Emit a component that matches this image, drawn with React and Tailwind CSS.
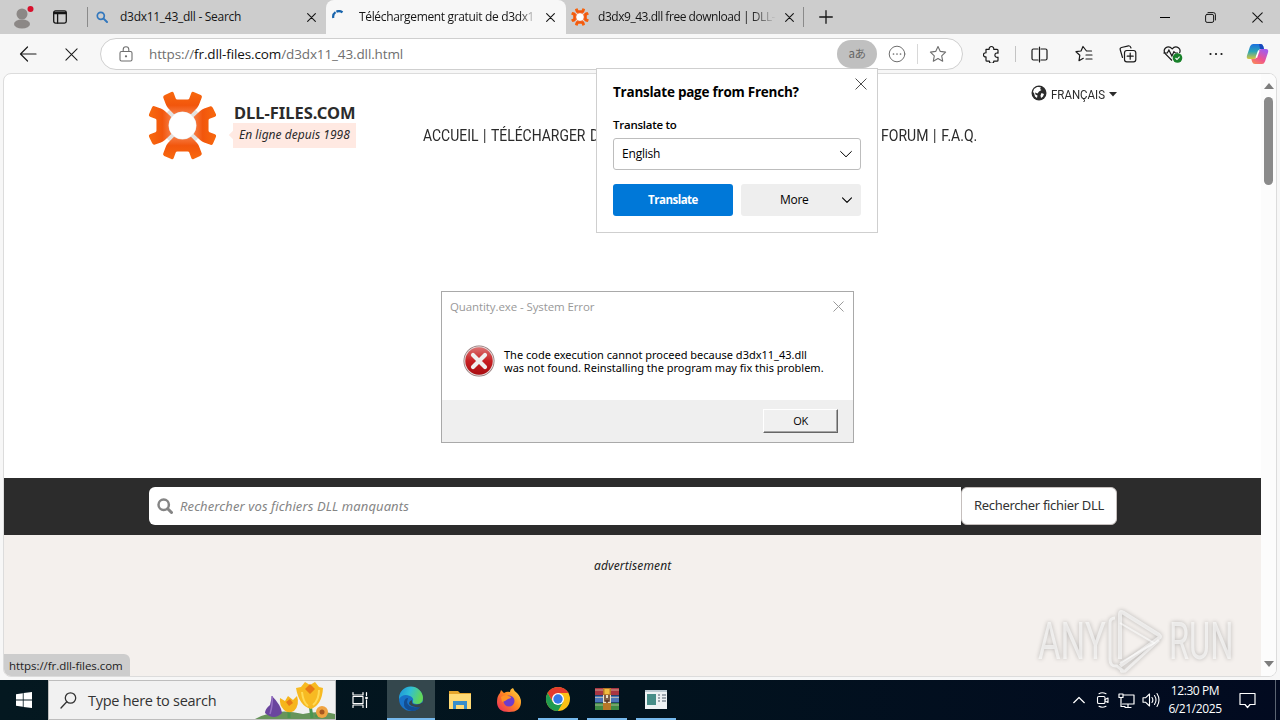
import React from "react";

function Icon({ size = 20, className = "", children, box = 20, width = 1.1 }) {
  return (
    <svg
      width={size}
      height={size}
      viewBox={`0 0 ${box} ${box}`}
      fill="none"
      stroke="currentColor"
      strokeWidth={width}
      strokeLinecap="round"
      strokeLinejoin="round"
      className={`shrink-0 ${className}`}
    >
      {children}
    </svg>
  );
}

function Cross({ size = 10, className = "", width = 1.2 }) {
  return (
    <Icon size={size} box={10} width={width} className={className}>
      <path d="M.7.7l8.6 8.6M9.3.7L.7 9.3" />
    </Icon>
  );
}

// Four orange arms around a white hole
function GearLogo({ size, className = "" }) {
  return (
    <svg width={size} height={size} viewBox="-102 -102 204 204" className={`shrink-0 ${className}`}>
      <defs>
        <linearGradient id="arm" x1="0" y1="0" x2="0" y2="1">
          <stop offset="0" stopColor="#f8690f" />
          <stop offset="0.6" stopColor="#f2560c" />
          <stop offset="1" stopColor="#f67c45" />
        </linearGradient>
      </defs>
      <circle r="60" fill="#e4e1df" />
      {[0, 90, 180, 270].map((angle) => (
        <path
          key={angle}
          transform={`rotate(${angle})`}
          d="M-52-90L-33-99Q-28-101-26-96L-20-80Q-19-77-15-77H15Q19-77 20-80L26-96Q28-101 33-99L54-90Q59-87 57-83L50-64Q48-58 43-52L25-33A41 41 0 0 0-25-33L-43-52Q-48-58-50-64L-57-83Q-58-87-52-90Z"
          fill="url(#arm)"
        />
      ))}
      <circle r="40" fill="white" />
    </svg>
  );
}

function TitleBar() {
  return (
    <div className="flex h-[34px] items-center bg-[#cdcdcd] text-[12px] text-[#151515]">
      {/* Profile */}
      <div className="flex w-[44px] justify-center">
        <svg width="24" height="24" viewBox="0 0 24 24">
          <circle cx="12" cy="9" r="5.5" fill="#8c8886" />
          <ellipse cx="12" cy="19" rx="8" ry="4.6" fill="#8c8886" />
          <circle cx="20.5" cy="4" r="3" fill="#d8102c" />
        </svg>
      </div>

      <div className="flex w-[43px] justify-center pr-[11px]">
        <Icon size={14} box={14} width={1.3}>
          <rect x=".7" y=".9" width="12.6" height="12.2" rx="1.8" />
          <path d="M1 2.3h12M1 3.5h12M4.6 3.5V13" />
        </Icon>
      </div>
      <div className="h-5 w-px bg-[#8a8a8a]" />

      {/* Tabs */}
      <div className="flex h-full w-[238px] items-center pl-2">
        <Icon size={12} box={12} width={1.7} className="text-[#3277bd]">
          <circle cx="4.8" cy="4.8" r="3.5" />
          <path d="M7.6 7.6l3.4 3.4" strokeWidth="2" />
        </Icon>
        <span className="ml-3 w-[187px] whitespace-nowrap tracking-[-0.28px]">d3dx11_43_dll - Search</span>
        <Cross size={9} />
      </div>

      <div className="flex h-full w-[240px] items-center rounded-t-lg bg-[#f7f7f7] pl-[6px]">
        <Icon size={14} box={14} width={2.2} className="text-[#1763ab]">
          <path d="M1.3 8A5.7 5.7 0 0 1 10.5 2.4" strokeDasharray="6.5 1" strokeLinecap="butt" />
        </Icon>
        <span className="ml-[13px] w-[178px] whitespace-nowrap tracking-[-0.34px] [mask-image:linear-gradient(to_right,black_90%,transparent)]">
          Téléchargement gratuit de d3dx1
        </span>
        <Cross size={9} className="ml-[9px]" />
      </div>

      <div className="flex h-full w-[237px] items-center pl-[5px]">
        <GearLogo size={18} />
        <span className="ml-[9px] w-[178px] whitespace-nowrap tracking-[-0.46px] [mask-image:linear-gradient(to_right,black_86%,transparent)]">
          d3dx9_43.dll free download | DLL-
        </span>
        <Cross size={9} className="ml-[9px]" />
      </div>
      <div className="h-5 w-px bg-[#8a8a8a]" />
      <Icon size={14} box={14} width={1.3} className="ml-[15px]">
        <path d="M7 .7v12.6M.7 7h12.6" />
      </Icon>

      {/* Window controls */}
      <div className="ml-auto flex h-full">
        <div className="flex w-[46px] items-center justify-center">
          <div className="h-px w-[10px] bg-black" />
        </div>
        <div className="flex w-[46px] items-center justify-center pr-px">
          <Icon size={11} box={11} width={1}>
            <rect x=".6" y="2.4" width="8" height="8" rx="1.5" />
            <path d="M3 .6h5.4a2 2 0 0 1 2 2V8" />
          </Icon>
        </div>
        <div className="flex w-[46px] items-center justify-center">
          <Cross size={11} width={1} />
        </div>
      </div>
    </div>
  );
}

function Copilot() {
  return (
    <svg width="23" height="22" viewBox="0 0 23 22" className="shrink-0">
      <defs>
        <linearGradient id="cpa" x1="0" y1="0" x2="0" y2="1">
          <stop offset="0" stopColor="#1b6fe0" />
          <stop offset=".5" stopColor="#2ba5b5" />
          <stop offset="1" stopColor="#d8c63c" />
        </linearGradient>
        <linearGradient id="cpb" x1="0" y1="1" x2=".6" y2="0">
          <stop offset="0" stopColor="#fb9250" />
          <stop offset=".5" stopColor="#ee5290" />
          <stop offset="1" stopColor="#a65be8" />
        </linearGradient>
      </defs>
      <path d="M7 1h7.5q2 0 2.7 2.3L18 6h-3q-2 0-2.6 2L10 14.5Q9.4 16 7.5 16H3Q0 16 1 12.5L4 3.5Q4.9 1 7 1Z" fill="url(#cpa)" />
      <path d="M13 1h1.5q2 0 2.7 2.3L18 6h-4Z" fill="#1849bd" />
      <path d="M16 21H9q-2.2 0-2.9-2.3L5.3 16H8q2 0 2.6-2L13 7.5Q13.6 6 15.5 6H20q3 0 2 3.5L19 18.5Q18.1 21 16 21Z" fill="url(#cpb)" />
      <path d="M10.3 14.7L12.8 7.4" stroke="white" strokeWidth="1.6" />
    </svg>
  );
}

function Toolbar() {
  return (
    <div className="flex h-10 items-center bg-[#f7f7f7] text-[#1a1a1a]">
      <div className="flex w-[100px] items-center pl-[19px]">
        <Icon size={18} box={18} width={1.2}>
          <path d="M17 9H1.5M8.5 2L1.5 9l7 7" />
        </Icon>
        <Cross size={13} width={0.8} className="ml-7" />
      </div>

      {/* Address bar */}
      <div className="flex h-8 w-[863px] items-center rounded-full border border-[#cfcfcf] bg-white text-[#6f6f6f]">
        <Icon size={16} box={16} width={1.1} className="ml-[17px]">
          <rect x="2" y="5.5" width="12" height="9.5" rx="1.5" />
          <path d="M5.2 5.5V3.6a2.8 2.8 0 0 1 5.6 0v1.9" />
          <circle cx="8" cy="10.3" r=".6" fill="currentColor" />
        </Icon>
        <div className="ml-[15px] w-[688px] whitespace-nowrap text-[13.5px] tracking-[-0.12px]">
          https://<span className="text-[#111]">fr.dll-files.com</span>/d3dx11_43.dll.html
        </div>
        <div className="flex h-7 w-10 items-center justify-center rounded-full bg-[#c0c0c0] pb-px font-['Noto_Sans_CJK_JP',sans-serif] text-[11.5px] tracking-[-0.5px] text-[#666]">
          aあ
        </div>
        <Icon size={18} box={18} width={1} className="ml-[11px]">
          <circle cx="9" cy="9" r="7.8" />
          <path d="M5.5 9h.01M9 9h.01M12.5 9h.01" strokeWidth="1.7" />
        </Icon>
        <div className="ml-[11px] h-5 w-px bg-[#d8d8d8]" />
        <Icon size={18} box={18} width={1.1} className="ml-[11px]">
          <path d="M9 1.5l2.3 4.9 5.3.7-3.900 3.7 1 5.4L9 13.6l-4.7 2.6 1-5.4-3.900-3.7 5.300-.7z" />
        </Icon>
      </div>

      {/* Actions */}
      <Icon size={18} box={18} width={1.2} className="ml-[20px]">
        <path d="M3 4.3h3.2a2.3 2.3 0 1 1 4.5 0h3.3q1 0 1 1v2.900a2.2 2.2 0 1 0 0 4v3q0 1-1 1h-3.200a2.2 2.2 0 0 1-4.4 0H4q-1 0-1-1v-3.300a2.1 2.1 0 1 1 0-4.100V4.300" />
      </Icon>
      <div className="ml-[14px] h-4 w-px bg-[#c4c4c4]" />
      <Icon size={17} box={17} width={1.2} className="ml-[15px]">
        <path d="M7 3H2.500Q1 3 1 4.500v8Q1 14 2.500 14H7M10 3h4.500Q16 3 16 4.500v8q0 1.500-1.500 1.500H10M8.500 1v15" />
      </Icon>
      <Icon size={18} box={18} width={1.2} className="ml-[27px]">
        <path d="M16.500 6h-5L8 1.500 6 6l-5 .7 3.800 3.600L4 15.700l4.300-2.400M11 10h6M11 14h6" />
      </Icon>
      <Icon size={18} box={18} width={1.2} className="ml-[26px]">
        <rect x="5.5" y="5.5" width="11.3" height="11.3" rx="2.3" />
        <path d="M3.500 12.500L1.300 5q-.6-2 1.200-2.500l7-1.700Q11.300.5 12 3M11.200 8.200v6M8.200 11.200h6" />
      </Icon>
      <svg width="20" height="18" viewBox="0 0 20 18" className="ml-[26px] shrink-0">
        <g fill="none" stroke="#1a1a1a" strokeWidth="1.2">
          <path d="M9 15.500L2.200 8.700Q0 5.500 2.500 3 6 .2 9.200 3.800q3-3.600 6.500-.8Q18 5 16.500 8" />
          <path d="M.3 8h4l1.600-3 3 6 2-4.300L12.300 8H15" />
        </g>
        <circle cx="14.5" cy="13" r="4.8" fill="#18812a" />
        <path d="M12.500 13l1.500 1.500 2.600-2.800" fill="none" stroke="white" strokeWidth="1.1" />
      </svg>
      <Icon size={16} box={16} width={2.2} className="ml-[25px]">
        <path d="M2.500 8h.01M8 8h.01M13.500 8h.01" />
      </Icon>
      <div className="ml-[22px]">
        <Copilot />
      </div>
    </div>
  );
}

function SiteHeader() {
  return (
    <div className="flex h-[404px] items-start pl-[144px] text-[#2b2b2b]">
      <GearLogo size={69} className="-mr-px mt-[17px]" />

      <div className="ml-[17px] mt-[26px] w-[190px]">
        <div className="h-[23px] whitespace-nowrap pl-px text-[16.5px] leading-[26px] font-bold font-['Noto_Sans',sans-serif]">
          DLL-FILES.COM
        </div>
        <div className="relative h-[25px] w-[123px] whitespace-nowrap bg-[#ffe9e2] pl-[6px] text-[12px] leading-[24px] italic tracking-[0.04px] font-['Noto_Sans',sans-serif]">
          <div className="absolute -left-[3px] top-[9px] size-[6px] rotate-45 bg-[#ffe9e2]" />
          <span className="relative">En ligne depuis 1998</span>
        </div>
      </div>

      <div className="mt-[48px] flex w-[608px] whitespace-nowrap font-['Roboto',sans-serif] text-[17px] leading-[26px] [word-spacing:1.5px]">
        <div className="w-[458px]">
          <span className="inline-block origin-left scale-x-[0.82]">ACCUEIL | TÉLÉCHARGER DLL</span>
        </div>
        <span className="inline-block origin-left scale-x-[0.825]">FORUM | F.A.Q.</span>
      </div>

      <div className="mt-[10px] flex h-5 items-center whitespace-nowrap">
        <svg width="16" height="16" viewBox="0 0 16 16" className="mb-[3px] shrink-0">
          <circle cx="8" cy="8" r="7.5" fill="#2b2b2b" />
          <path d="M8 2l2 .5-1 1.500 1.500 1-2.500 1.500-1.500 2L4 7.500l.5 2 2 1-.5 2.500-2-1.500-1-3.500L2 7l1-3 3-2zM10.500 8l2.500 1-1 2.500-2 1.500-.5-2.500z" fill="white" />
        </svg>
        <span className="ml-1 w-[58px] font-['Roboto',sans-serif] text-[13.5px]">
          <span className="inline-block origin-left scale-x-[0.85]">FRANÇAIS</span>
        </span>
        <svg width="8" height="5" viewBox="0 0 8 5" className="shrink-0">
          <path d="M0 0h8L4 4.500z" fill="#2b2b2b" />
        </svg>
      </div>
    </div>
  );
}

function SearchStrip() {
  return (
    <div className="flex h-[57px] items-start bg-[#2c2c2c] pt-[9px] pl-[145px] font-['Noto_Sans',sans-serif] text-[13px]">
      <div className="flex h-[38px] w-[812px] items-center rounded-l-md bg-white text-[#858585]">
        <Icon size={16} box={16} width={2.5} className="ml-2">
          <circle cx="6.7" cy="6.7" r="5.2" />
          <path d="M10.700 10.700L14.500 14.500" strokeWidth="3" />
        </Icon>
        <span className="ml-[7px] whitespace-nowrap pt-px italic tracking-[0.1px]">Rechercher vos fichiers DLL manquants</span>
      </div>
      <div className="flex h-[38px] w-[156px] items-center justify-center whitespace-nowrap rounded-md border border-[#c5bfbd] bg-white tracking-[-0.33px] text-[#333]">
        Rechercher fichier DLL
      </div>
    </div>
  );
}

function Watermark() {
  return (
    <div className="absolute left-[1034px] top-[534px] flex h-[66px] w-[202px] items-center text-white/60 [filter:drop-shadow(0_0_2px_rgba(0,0,0,0.4))]">
      <span className="w-[68px] font-['Roboto',sans-serif] text-[51px] leading-none">
        <span className="inline-block origin-left scale-x-[0.68]">ANY</span>
      </span>
      <svg width="58" height="64" viewBox="0 0 58 64" fill="none" stroke="currentColor" className="shrink-0">
        <path d="M14 50V5q0-3 3-1.500L53 26q2 1.500 0 3L14 57" strokeWidth="4" />
        <path d="M14 14l34 20-34 20" strokeWidth="2" />
        <path d="M9 9q-5 0-5 5v36q0 8 7 7l5 4q-2 2 3 1l34-31" strokeWidth="3" />
      </svg>
      <span className="ml-[5px] font-['Roboto',sans-serif] text-[51px] leading-none">
        <span className="inline-block origin-left scale-x-[0.64]">RUN</span>
      </span>
    </div>
  );
}

function WebPage() {
  return (
    <div className="relative flex h-[604px] overflow-hidden rounded-lg border border-[#dcdcdc] bg-white">
      <div className="w-[1257px] shrink-0 overflow-hidden">
        <SiteHeader />
        <SearchStrip />
        <div className="h-[150px] bg-[#f4f0ed] pt-[21px] pl-[590px] font-['Noto_Sans',sans-serif] text-[12px] leading-5 tracking-[0.12px] italic text-[#222]">
          advertisement
        </div>
      </div>

      {/* Scrollbar */}
      <div className="flex flex-1 flex-col items-center bg-[#fcfcfc] pt-[9px] pb-[9px]">
        <svg width="10" height="6" viewBox="0 0 10 6">
          <path d="M0 6L5 0l5 6z" fill="#7d7d7d" />
        </svg>
        <div className="mt-2 h-[88px] w-[9px] rounded-full bg-[#8a8a8a]" />
        <svg width="10" height="6" viewBox="0 0 10 6" className="mt-auto">
          <path d="M0 0l5 6 5-6z" fill="#7d7d7d" />
        </svg>
      </div>

      {/* Link status */}
      <div className="absolute bottom-0 left-0 h-[22px] w-[126px] whitespace-nowrap rounded-tr-md bg-[#cdcdcd] pl-[5px] text-[11.5px] leading-[23px] tracking-[-0.06px] text-[#222]">
        https://fr.dll-files.com
      </div>
      <Watermark />
    </div>
  );
}

function TranslatePopup() {
  return (
    <div className="absolute left-[596px] top-[68px] h-[165px] w-[282px] border border-[#cfcfcf] bg-white px-4 text-[12px] text-black">
      <div className="flex h-[47px] items-center justify-between">
        <span className="whitespace-nowrap text-[13.5px] font-bold tracking-[-0.24px]">Translate page from French?</span>
        <Cross size={12} width={0.8} className="-mr-[6px] mb-[17px] text-[#444]" />
      </div>
      <div className="h-[22px] text-[11.5px] leading-[17px] font-semibold tracking-[-0.25px]">Translate to</div>
      <div className="flex h-8 items-center justify-between rounded-[3px] border border-[#bdbdbd] px-2">
        <span className="tracking-[-0.2px]">English</span>
        <Icon size={12} box={12} width={1}>
          <path d="M.6 3.500L6 8.800l5.400-5.300" />
        </Icon>
      </div>
      <div className="mt-[14px] flex gap-2">
        <div className="flex h-8 w-[120px] items-center justify-center rounded-[3px] bg-[#0078d8] text-[11.5px] font-bold tracking-[-0.5px] text-white">
          Translate
        </div>
        <div className="flex h-8 w-[120px] items-center rounded-[3px] bg-[#eeeeee] pl-[39px]">
          <span className="w-[62px] tracking-[-0.3px]">More</span>
          <Icon size={10} box={12} width={1.3}>
            <path d="M.6 3.500L6 8.800l5.400-5.300" />
          </Icon>
        </div>
      </div>
    </div>
  );
}

function ErrorDialog() {
  return (
    <div className="absolute left-[441px] top-[291px] flex h-[152px] w-[413px] flex-col border border-[#a9a9a9] bg-white">
      <div className="flex h-[30px] items-center justify-between pl-2 pr-[9px] text-[11.5px] text-[#999]">
        <span className="whitespace-nowrap tracking-[-0.1px]">Quantity.exe - System Error</span>
        <Cross size={11} width={0.9} className="mb-[2px]" />
      </div>
      <div className="flex flex-1 items-start pl-[21px] pt-[23px]">
        <svg width="32" height="32" viewBox="0 0 32 32" className="shrink-0">
          <defs>
            <linearGradient id="err" x1="0" y1="0" x2="0" y2="1">
              <stop offset="0" stopColor="#dc7373" />
              <stop offset=".5" stopColor="#c71f22" />
              <stop offset="1" stopColor="#a90d12" />
            </linearGradient>
          </defs>
          <circle cx="16" cy="16" r="15.5" fill="#8e7070" />
          <circle cx="16" cy="16" r="14.8" fill="#e3d7d7" />
          <circle cx="16" cy="16" r="13.7" fill="url(#err)" />
          <path d="M10 10l12 12M22 10L10 22" stroke="#f0f0f0" strokeWidth="4.2" strokeLinecap="round" />
        </svg>
        <div className="ml-[9px] mt-[3px] whitespace-nowrap font-['Noto_Sans',sans-serif] text-[11px] leading-[13px] text-black">
          <div>The code execution cannot proceed because d3dx11_43.dll</div>
          <div>was not found. Reinstalling the program may fix this problem.</div>
        </div>
      </div>
      <div className="flex h-[42px] justify-end bg-[#efefef] pr-[15px] pt-[9px]">
        <div className="h-6 w-[75px] border border-t-white border-l-white border-r-[#666] border-b-[#666] bg-[#f0f0f0] text-center text-[11px] leading-[22px] tracking-[-0.3px] shadow-[inset_-1px_-1px_0_#a5a5a5]">
          OK
        </div>
      </div>
    </div>
  );
}

function Flowers() {
  return (
    <svg width="80" height="38" viewBox="0 0 80 38" className="ml-auto shrink-0">
      <path d="M0 38Q22 26 48 33q18-4 32 0v5z" fill="#67945a" />
      <path d="M17 15q9 9 10 17-8 8-17 0 0-4 5-8z" fill="#6a459e" />
      <path d="M17 15q1 8-2 18" stroke="#9570c2" strokeWidth="1.5" fill="none" />
      <path d="M34 37V28M57 37l-2-14M61 36q5-7 8-8" stroke="#4b9650" strokeWidth="3" fill="none" />
      <path d="M25 17l5 3 3-5 5 4 4-4q3 9-3 15-6 3-10-1-5-5-4-12z" fill="#f6b51b" />
      <path d="M41 7l5-1 4-5 5 3 5-3 4 5 4 1q-1 17-12 21-12-3-15-21z" fill="#f7ba22" />
      <path d="M50 8l5-5 5 5-5 5zM31 21l4-3 3 4-4 3z" fill="#e87a15" />
      <path d="M47 11q1 10 6 14M64 9q0 10-6 15" stroke="#ffda55" strokeWidth="2" fill="none" />
      <circle cx="67" cy="31" r="6" fill="#efa341" />
      <circle cx="67" cy="31" r="2.5" fill="#a65720" />
    </svg>
  );
}

function Edge() {
  return (
    <svg width="26" height="26" viewBox="0 0 26 26">
      <defs>
        <linearGradient id="ea" x1="0" y1="0" x2="1" y2=".3">
          <stop offset="0" stopColor="#1b8fd8" />
          <stop offset=".5" stopColor="#30bfd5" />
          <stop offset="1" stopColor="#62d759" />
        </linearGradient>
      </defs>
      <circle cx="13" cy="13" r="12" fill="#1872c8" />
      <path d="M1 13A12 12 0 0 1 25 12q0 6-6 6-5 0-4-3 1-3-3-5Q5 7 1 13z" fill="url(#ea)" />
      <path d="M10 12q-3 8 5 9 5 1 8-1-3 5-9 5Q5 24 6 16q1-4 4-4z" fill="#134d92" />
      <path d="M14 14q-1 5 5 4.500 4-.5 5-2l2 2-2 2.500q-9 1-13-3 0-3 3-4z" fill="#36454b" />
    </svg>
  );
}

function Firefox() {
  return (
    <svg width="26" height="26" viewBox="0 0 26 26">
      <defs>
        <linearGradient id="ff" x1="1" y1="0" x2="0" y2="1">
          <stop offset="0" stopColor="#ffe14a" />
          <stop offset=".45" stopColor="#ff8a1f" />
          <stop offset="1" stopColor="#ed2361" />
        </linearGradient>
      </defs>
      <path d="M4 6l1-3 3 3q3-2 6-1 0-3 3-4 1 3 4 5 4 4 4 9 0 10-12 10T1 15q0-6 3-9z" fill="url(#ff)" />
      <circle cx="13" cy="14" r="5.5" fill="#6f3ccc" />
      <path d="M5 10q4-3 7-1 3 0 3 2l-3 1-3 2-3 1z" fill="#ff9126" />
    </svg>
  );
}

function Chrome() {
  return (
    <svg width="26" height="26" viewBox="-13 -13 26 26">
      <circle r="12" fill="#fbc116" />
      <path d="M-10.400-6A12 12 0 0 1 10.400-6H0V0L-5 3z" fill="#e33b2e" />
      <path d="M-10.400-6A12 12 0 0 0 0 12L5.200 3H-5.200z" fill="#209b50" />
      <circle r="6" fill="white" />
      <circle r="4.7" fill="#3579e8" />
    </svg>
  );
}

function Taskbar() {
  return (
    <div className="flex h-10 items-center bg-linear-to-r from-[#041820] via-[#02131e] to-[#020a20] text-white">
      <div className="flex w-12 justify-center">
        <svg width="16" height="16" viewBox="0 0 16 16" fill="white">
          <path d="M0 2.200L6.800 1.200V7.600H0zM7.600 1.100L16 0V7.600H7.600zM0 8.400h6.800v6.400L0 13.800zM7.600 8.400H16V16l-8.400-1.100z" />
        </svg>
      </div>

      <div className="flex h-10 w-[288px] items-center border border-[#bdbdbd] bg-[#f1f1f1] pl-[11px] text-[#333]">
        <Icon size={17} box={17} width={1.3}>
          <circle cx="10.5" cy="6" r="5.2" />
          <path d="M6.800 9.700L1 16" />
        </Icon>
        <span className="ml-[11px] whitespace-nowrap pt-px text-[14.5px] tracking-[-0.27px]">Type here to search</span>
        <Flowers />
      </div>

      <div className="flex w-[51px] justify-center">
        <Icon size={18} box={18} width={1.2} className="mr-1">
          <path d="M2 1.500V4h10V1.500M2 16.500V14h10v2.500M2 5.500h10v7H2zM15.500 1.500v3M15.500 9v7.500" />
          <path d="M15 6.500h1v1h-1z" strokeWidth="1.5" />
        </Icon>
      </div>

      {/* Running apps */}
      <div className="flex h-10 w-12 items-center justify-center border-b-2 border-[#76b9ed] bg-[#34474d]">
        <Edge />
      </div>
      <div className="flex w-[49px] justify-center">
        <svg width="24" height="22" viewBox="0 0 24 22">
          <path d="M1 2h9l2 2h11v5H1z" fill="#e5a52c" />
          <path d="M1 5h22v15H1z" fill="#ffda75" />
          <path d="M5 12h14v8h-3v-4H8v4H5z" fill="#388ecb" />
        </svg>
      </div>
      <div className="flex w-[49px] justify-center">
        <Firefox />
      </div>
      <div className="flex w-[49px] justify-center">
        <div className="flex h-10 w-10 items-center justify-center border-b-2 border-[#76b9ed]">
          <Chrome />
        </div>
      </div>
      <div className="flex w-[49px] justify-center">
        <div className="flex h-10 w-10 items-center justify-center border-b-2 border-[#76b9ed]">
          <svg width="24" height="22" viewBox="0 0 24 22">
            <path d="M0 0h24v7H0z" fill="#a83643" />
            <path d="M0 7.500h24v7H0z" fill="#4b75b9" />
            <path d="M0 15h24v7H0z" fill="#3e8b45" />
            <path d="M0 2h24M0 9.500h24M0 17h24" stroke="#ddd0b0" strokeWidth=".7" />
            <path d="M8 0h8v22H8z" fill="#b97827" />
            <path d="M9.500 1h5v5h-5z" fill="#f0bd40" />
            <path d="M8 7h8v8H8z" fill="#e9dfc7" />
            <path d="M10 7v6h4V7M12 10v5" stroke="#5a3520" strokeWidth="1.5" fill="none" />
          </svg>
        </div>
      </div>
      <div className="flex w-[49px] justify-center">
        <div className="flex h-10 w-10 items-center justify-center border-b-2 border-[#76b9ed]">
          <svg width="22" height="19" viewBox="0 0 22 19">
            <rect width="22" height="19" fill="#eef2f4" />
            <path d="M0 0h22v2H0z" fill="#bdcbd3" />
            <path d="M2 4h9v11H2z" fill="#478d88" />
            <path d="M13 5h2M13 8h2M13 11h2M17 5h4M17 8h4M17 11h4" stroke="#4d5b68" />
          </svg>
        </div>
      </div>

      {/* Tray */}
      <div className="ml-auto flex h-10 items-center">
        <Icon size={12} box={12} width={1.2}>
          <path d="M.7 8.700L6 3.500l5.300 5.200" />
        </Icon>
        <Icon size={16} box={16} width={1.1} className="ml-[10px]">
          <rect x="2.5" y="4.5" width="7.5" height="7" rx="1.3" />
          <path d="M10 7.500l3-1.500v4.500L10 9M4 1.700q3-1.800 7 0M4 14.300q3 1.800 7 0" />
        </Icon>
        <Icon size={17} box={17} width={1.2} className="ml-[7px]">
          <path d="M5.500 3H16v9H4.500M7 15.500h6M10 12v3.500M1 2h4v3.500H1zM3 5.500v9H7" />
        </Icon>
        <Icon size={18} box={18} width={1.1} className="ml-[7px]">
          <path d="M1 6.800h2.500L7.500 3v12l-4-3.800H1zM10 6.500q1.700 2.500 0 5M12.500 4.500q3 4.500 0 9M15 2.500q4 6.500 0 13" />
        </Icon>
        <div className="ml-2 w-[54px] whitespace-nowrap text-center text-[12px] leading-[18px] tracking-[-0.4px]">
          <div>12:30 PM</div>
          <div>6/21/2025</div>
        </div>
        <Icon size={17} box={17} width={1.2} className="ml-[17px]">
          <path d="M1 1.500h15v11h-5L8.500 15.500 6 12.500H1z" />
        </Icon>
        <div className="ml-[19px] h-10 w-[5px] border-l border-[#5b6472]" />
      </div>
    </div>
  );
}

function App() {
  return (
    <div className="relative h-[720px] w-[1280px] overflow-hidden bg-[#f7f7f7] font-['Open_Sans','Noto_Sans',sans-serif]">
      <TitleBar />
      <Toolbar />
      <div className="-mt-px mb-[3px] px-[3px]">
        <WebPage />
      </div>
      <Taskbar />
      <TranslatePopup />
      <ErrorDialog />
    </div>
  );
}

export default App;
